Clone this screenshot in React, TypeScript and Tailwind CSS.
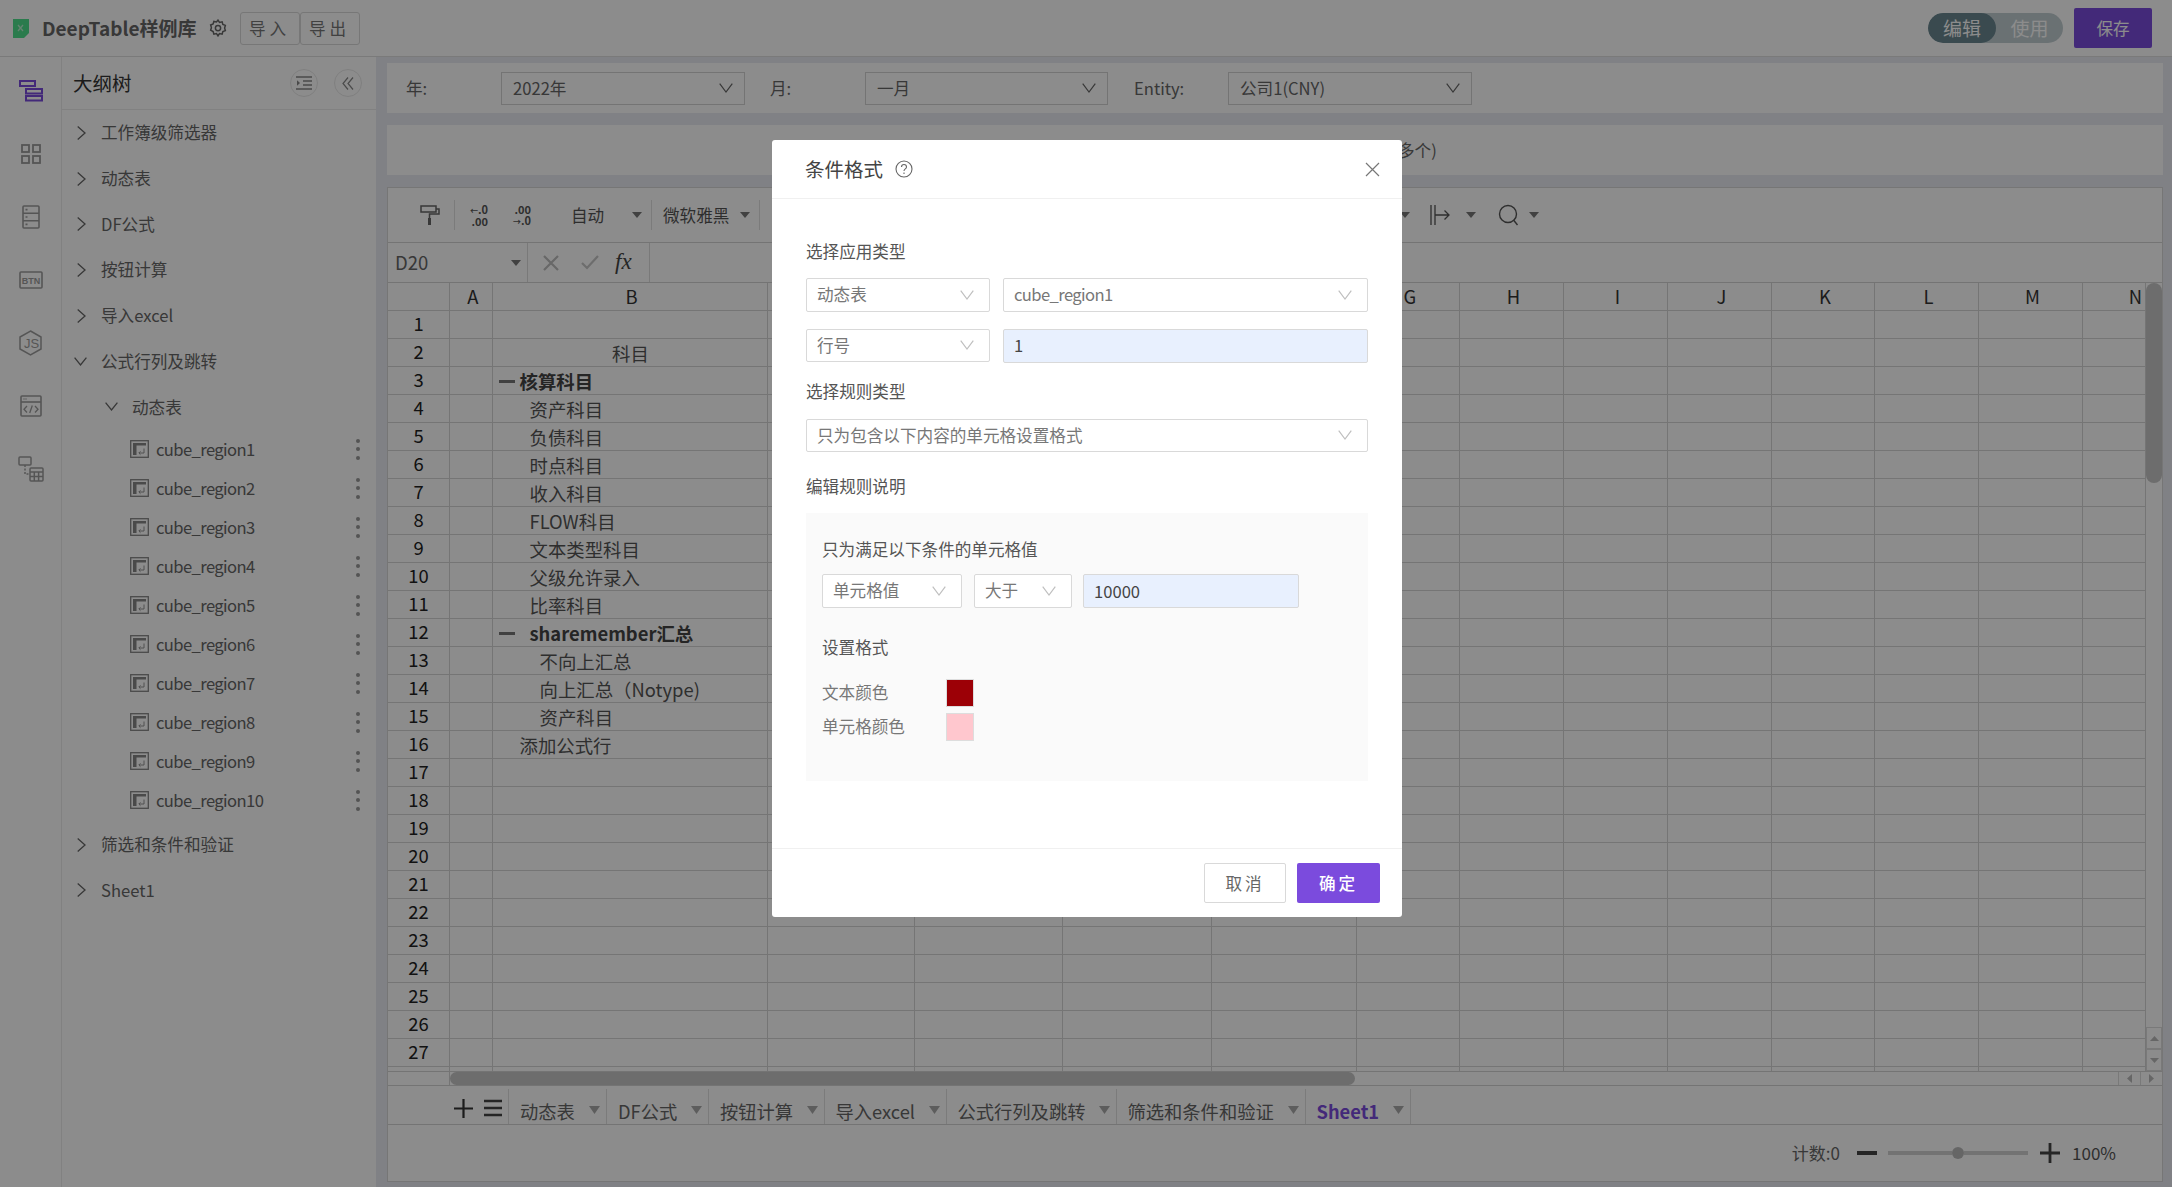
import type { ReactNode } from "react";

const gridCols =
  "grid-cols-[62px_42.5px_275px_147.5px_148px_148.5px_145px_103.5px_104px_104px_104px_103px_104px_104px_63px]";

const columns = ["", "A", "B", "C", "D", "E", "F", "G", "H", "I", "J", "K", "L", "M", "N"];

const treeTop = ["工作簿级筛选器", "动态表", "DF公式", "按钮计算", "导入excel"];
const regions = Array.from({ length: 10 }, (_, i) => `cube_region${i + 1}`);

const tabs = [
  { name: "动态表", w: "w-[98px]" },
  { name: "DF公式", w: "w-[102px]" },
  { name: "按钮计算", w: "w-[115.5px]" },
  { name: "导入excel", w: "w-[122px]" },
  { name: "公式行列及跳转", w: "w-[170px]" },
  { name: "筛选和条件和验证", w: "w-[189px]" },
  { name: "Sheet1", w: "w-[105.5px]", active: true },
];

type CellB = { text: string; pad: string; bold?: boolean; center?: boolean; dash?: string };

const colB: Record<number, CellB> = {
  2: { text: "科目", pad: "", center: true },
  3: { text: "核算科目", pad: "pl-[6px]", bold: true, dash: "mr-[5px]" },
  4: { text: "资产科目", pad: "pl-[37px]" },
  5: { text: "负债科目", pad: "pl-[37px]" },
  6: { text: "时点科目", pad: "pl-[37px]" },
  7: { text: "收入科目", pad: "pl-[37px]" },
  8: { text: "FLOW科目", pad: "pl-[37px]" },
  9: { text: "文本类型科目", pad: "pl-[37px]" },
  10: { text: "父级允许录入", pad: "pl-[37px]" },
  11: { text: "比率科目", pad: "pl-[37px]" },
  12: { text: "sharemember汇总", pad: "pl-[6px]", bold: true, dash: "mr-[15px]" },
  13: { text: "不向上汇总", pad: "pl-[47px]" },
  14: { text: "向上汇总（Notype)", pad: "pl-[47px]" },
  15: { text: "资产科目", pad: "pl-[47px]" },
  16: { text: "添加公式行", pad: "pl-[27px]" },
};

function Caret({ className = "" }: { className?: string }) {
  return (
    <svg width="10" height="6" viewBox="0 0 10 6" className={`shrink-0 ${className}`}>
      <path d="M0 0h10L5 6z" fill="#777" />
    </svg>
  );
}

function ChevronDown({ color = "#bfbfbf" }: { color?: string }) {
  return (
    <svg width="14" height="10" viewBox="0 0 14 10" fill="none" className="shrink-0">
      <path d="M.7.7 7 9 13.3.7" stroke={color} strokeWidth="1.2" />
    </svg>
  );
}

function TreeArrow({ open }: { open?: boolean }) {
  return open ? (
    <svg width="13" height="9" viewBox="0 0 13 9" fill="none" className="shrink-0">
      <path d="M.6.6 6.5 8 12.4.6" stroke="#666" strokeWidth="1.3" />
    </svg>
  ) : (
    <svg width="9" height="14" viewBox="0 0 9 14" fill="none" className="shrink-0">
      <path d="M.7.6 8 7 .7 13.4" stroke="#666" strokeWidth="1.3" />
    </svg>
  );
}

function RailIcons() {
  const s = "#9c9c9c";
  return (
    <div className="flex w-[62px] shrink-0 flex-col items-center border-r border-[#ececec] bg-white pt-[2px]">
      <div className="flex h-[63px] items-center">
        <svg width="24" height="22" viewBox="0 0 24 22" fill="none" stroke="#7b4bdd" strokeWidth="2">
          <rect x="1" y="1" width="15" height="5" />
          <rect x="7" y="9" width="16" height="4.5" />
          <rect x="7" y="16" width="16" height="4.5" />
        </svg>
      </div>
      <div className="flex h-[63px] items-center">
        <svg width="20" height="20" viewBox="0 0 20 20" fill="none" stroke={s} strokeWidth="1.8">
          <rect x="1" y="1" width="7" height="7" />
          <rect x="12" y="1" width="7" height="7" />
          <rect x="1" y="12" width="7" height="7" />
          <rect x="12" y="12" width="7" height="7" />
        </svg>
      </div>
      <div className="flex h-[63px] items-center">
        <svg width="18" height="24" viewBox="0 0 18 24" fill="none" stroke={s} strokeWidth="1.6">
          <rect x="1" y="1" width="16" height="22" rx="1" />
          <path d="M1 8.3h16M1 15.7h16" />
          <path d="M3.5 4.6h2M3.5 12h2M3.5 19.4h2" />
        </svg>
      </div>
      <div className="flex h-[63px] items-center">
        <svg width="24" height="18" viewBox="0 0 24 18" fill="none">
          <rect x="1" y="1" width="22" height="16" rx="1" stroke={s} strokeWidth="1.6" />
          <text x="12" y="12.5" textAnchor="middle" fontSize="9" fontWeight="700" fill={s} fontFamily="Liberation Sans">
            BTN
          </text>
        </svg>
      </div>
      <div className="flex h-[63px] items-center">
        <svg width="23" height="26" viewBox="0 0 23 26" fill="none">
          <path d="M11.5 1 22 7v12l-10.5 6L1 19V7z" stroke={s} strokeWidth="1.5" />
          <text x="12.5" y="18" textAnchor="middle" fontSize="13" fill={s} fontFamily="Liberation Sans">
            JS
          </text>
        </svg>
      </div>
      <div className="flex h-[63px] items-center">
        <svg width="22" height="22" viewBox="0 0 22 22" fill="none" stroke={s} strokeWidth="1.6">
          <rect x="1" y="1" width="20" height="20" rx="1" />
          <path d="M1 7h20" />
          <path d="M3.5 4h4" strokeDasharray="1 1" />
          <path d="M7 11l-3 3.2L7 17.5M15 11l3 3.2-3 3.3M12.3 10.5l-2.6 7.5" strokeWidth="1.3" />
        </svg>
      </div>
      <div className="flex h-[63px] items-center">
        <svg width="26" height="26" viewBox="0 0 26 26" fill="none" stroke={s} strokeWidth="1.5">
          <rect x="1" y="1" width="12" height="8" rx="1" />
          <path d="M7 9v9h4" strokeDasharray="2 1.5" />
          <rect x="12" y="12" width="13" height="13" rx="1" />
          <path d="M12 16h13M12 20.5h13M16.3 16v9M20.6 16v9" />
        </svg>
      </div>
    </div>
  );
}

function RegionIcon() {
  return (
    <svg width="19" height="18" viewBox="0 0 19 18" fill="none" className="shrink-0">
      <rect x=".7" y=".7" width="17.6" height="16.6" stroke="#888" strokeWidth="1.3" />
      <path d="M3 3h13v2.600H3zM3 5.600h3.500V15H3z" fill="#888" />
      <path d="M14 8.500v4.500h-5M10.500 11.300 8.800 13l1.700 1.700" stroke="#888" strokeWidth=".9" />
    </svg>
  );
}

function Sidebar() {
  return (
    <div className="flex w-[314px] shrink-0 flex-col bg-white">
      <div className="flex h-[53px] shrink-0 items-center border-b border-[#ececec] pr-[14px] pl-[11px]">
        <span className="flex-1 text-[19.5px] text-[#333]">大纲树</span>
        <div className="flex h-[28px] w-[28px] items-center justify-center rounded-full border border-[#e8e8e8]">
          <svg width="16" height="14" viewBox="0 0 16 14" fill="none" stroke="#888" strokeWidth="1.4">
            <path d="M0 1h16M7 5h9M7 9h9M0 13h16" />
            <path d="M1 4.300 4 7 1 9.700z" fill="#888" stroke="none" />
          </svg>
        </div>
        <div className="ml-[16px] flex h-[28px] w-[28px] items-center justify-center rounded-full border border-[#e8e8e8]">
          <svg width="12" height="13" viewBox="0 0 12 13" fill="none" stroke="#888" strokeWidth="1.2">
            <path d="M6 .5 1 6.500l5 6M11 .5 6 6.500l5 6" />
          </svg>
        </div>
      </div>
      {treeTop.map((t) => (
        <div key={t} className="flex h-[45.7px] shrink-0 items-center pl-[15px] text-[#666]">
          <TreeArrow />
          <span className="ml-[15px]">{t}</span>
        </div>
      ))}
      <div className="flex h-[45.7px] shrink-0 items-center pl-[12px] text-[#666]">
        <TreeArrow open />
        <span className="ml-[14px]">公式行列及跳转</span>
      </div>
      <div className="flex h-[45.7px] shrink-0 items-center pl-[43px] text-[#666]">
        <TreeArrow open />
        <span className="ml-[14px]">动态表</span>
      </div>
      {regions.map((r) => (
        <div key={r} className="flex h-[39px] shrink-0 items-center pr-[16px] pl-[68px] text-[#666]">
          <RegionIcon />
          <span className="ml-[7px] flex-1 tracking-[-0.6px]">{r}</span>
          <span className="flex flex-col gap-[4.5px]">
            <i className="h-[4px] w-[4px] rounded-full bg-[#999]" />
            <i className="h-[4px] w-[4px] rounded-full bg-[#999]" />
            <i className="h-[4px] w-[4px] rounded-full bg-[#999]" />
          </span>
        </div>
      ))}
      <div className="mt-[2px] flex h-[45.7px] shrink-0 items-center pl-[15px] text-[#666]">
        <TreeArrow />
        <span className="ml-[15px]">筛选和条件和验证</span>
      </div>
      <div className="flex h-[45.7px] shrink-0 items-center pl-[15px] text-[#666]">
        <TreeArrow />
        <span className="ml-[15px]">Sheet1</span>
      </div>
    </div>
  );
}

function FilterSelect({ label, w }: { label: string; w: string }) {
  return (
    <div className={`flex h-[33px] ${w} shrink-0 items-center justify-between border border-[#d4d4d4] pr-[11px] pl-[11px] text-[#666]`}>
      <span>{label}</span>
      <ChevronDown color="#666" />
    </div>
  );
}

function Sep({ className = "" }: { className?: string }) {
  return <span className={`h-[30px] w-px shrink-0 bg-[#e0e0e0] ${className}`} />;
}

function Toolbar() {
  return (
    <div className="flex h-[55px] shrink-0 items-center border-b border-[#d4d4d4] text-[#555]">
      <svg width="20" height="20" viewBox="0 0 20 20" fill="none" stroke="#666" strokeWidth="1.5" className="ml-[32px] shrink-0">
        <path d="M1 1h15v6H1z" />
        <path d="M16 4h3v5H9.500v11" strokeWidth="1.5" />
        <path d="M9.500 13v7" strokeWidth="3" />
      </svg>
      <Sep className="ml-[14px]" />
      <span className="ml-[15px] flex w-[18px] shrink-0 flex-col items-end text-[11px] leading-[11px] font-semibold whitespace-nowrap">
        <span>
          <span className="text-[8px]">←</span>.0
        </span>
        <span>.00</span>
      </span>
      <span className="ml-[27px] flex w-[16px] shrink-0 flex-col items-end text-[11px] leading-[11px] font-semibold whitespace-nowrap">
        <span>.00</span>
        <span>
          <span className="text-[8px]">→</span>.0
        </span>
      </span>
      <span className="ml-[40px] w-[34px] shrink-0 whitespace-nowrap">自动</span>
      <Caret className="ml-[27px]" />
      <Sep className="ml-[9px]" />
      <span className="ml-[11px] w-[66px] shrink-0 whitespace-nowrap">微软雅黑</span>
      <Caret className="ml-[11px]" />
      <Sep className="ml-[9px]" />
      <Caret className="ml-[640px]" />
      <svg width="20" height="20" viewBox="0 0 20 20" fill="none" stroke="#555" strokeWidth="1.3" className="ml-[20px] shrink-0">
        <path d="M1 0v20M5 0v20M5 10h14M14.500 5.500 19 10l-4.500 4.500" />
      </svg>
      <Caret className="ml-[16px]" />
      <svg width="22" height="22" viewBox="0 0 22 22" fill="none" stroke="#555" strokeWidth="1.4" className="ml-[22px] shrink-0">
        <circle cx="10" cy="10" r="8.5" />
        <path d="m15.500 16 4 5" />
      </svg>
      <Caret className="ml-[9px]" />
    </div>
  );
}

function FormulaBar() {
  return (
    <div className="flex h-[40px] shrink-0 items-center border-b border-[#d4d4d4]">
      <span className="ml-[7px] w-[116px] shrink-0 text-[18.5px] text-[#666]">D20</span>
      <Caret />
      <span className="ml-[6px] h-full w-px bg-[#dcdcdc]" />
      <svg width="16" height="16" viewBox="0 0 16 16" fill="none" stroke="#bdbdbd" strokeWidth="2.2" className="ml-[15px] shrink-0">
        <path d="m1 1 14 14M15 1 1 15" />
      </svg>
      <svg width="18" height="15" viewBox="0 0 18 15" fill="none" stroke="#c6c6c6" strokeWidth="2.2" className="ml-[22px] shrink-0">
        <path d="m1 8 5 5L17 1" />
      </svg>
      <span className="ml-[16px] w-[18px] shrink-0 font-['Liberation_Serif',serif] text-[23px] text-[#444] italic">fx</span>
      <span className="ml-[16px] h-full w-px bg-[#dcdcdc]" />
    </div>
  );
}

function Grid() {
  const rows = Array.from({ length: 28 }, (_, i) => i + 1);
  const line = "box-border border-r border-b border-[#d6d6d6]";
  return (
    <div className={`grid h-[788px] w-[1758px] shrink-0 auto-rows-[28px] overflow-hidden ${gridCols} text-[18.4px] text-[#555]`}>
      {columns.map((c, i) => (
        <div
          key={`h${i}`}
          className={`flex items-center ${i === 14 ? "justify-end pr-[3px]" : "justify-center pl-[4px]"} text-[#333] ${line}`}
        >
          {c}
        </div>
      ))}
      {rows.map((r) => {
        const b = colB[r];
        return columns.map((_, i) => {
          if (i === 0) {
            return (
              <div key={`${r}-0`} className={`flex items-center justify-center pb-[2px] text-[#222] ${line}`}>
                {r}
              </div>
            );
          }
          if (i === 2 && b) {
            return (
              <div
                key={`${r}-2`}
                className={`flex items-center pt-[2px] whitespace-nowrap ${b.center ? "justify-center pl-[2px]" : b.pad} ${b.bold ? "font-bold text-[#444]" : ""} ${line}`}
              >
                {b.dash && <span className={`h-[2.5px] w-[16px] bg-[#777] ${b.dash}`} />}
                {b.text}
              </div>
            );
          }
          return <div key={`${r}-${i}`} className={line} />;
        });
      })}
    </div>
  );
}

function VScroll() {
  return (
    <div className="flex w-[16px] shrink-0 flex-col bg-white">
      <div className="h-[200px] rounded-full bg-[#c6c6c6]" />
      <div className="flex-1" />
      <div className="flex h-[22px] items-center justify-center border border-[#dcdcdc]">
        <svg width="9" height="5" viewBox="0 0 9 5"><path d="M0 5h9L4.500 0z" fill="#bbb" /></svg>
      </div>
      <div className="flex h-[22px] items-center justify-center border border-[#dcdcdc]">
        <svg width="9" height="5" viewBox="0 0 9 5"><path d="M0 0h9L4.500 5z" fill="#bbb" /></svg>
      </div>
    </div>
  );
}

function HScroll() {
  return (
    <div className="flex h-[15px] shrink-0 border-t border-b border-[#d4d4d4]">
      <div className="w-[62px] shrink-0 border-r border-[#d4d4d4]" />
      <div className="w-[905px] rounded-full bg-[#c6c6c6]" />
      <div className="flex-1" />
      <div className="flex w-[22px] items-center justify-center border-l border-[#dcdcdc]">
        <svg width="5" height="9" viewBox="0 0 5 9"><path d="M5 0v9L0 4.500z" fill="#bbb" /></svg>
      </div>
      <div className="flex w-[22px] items-center justify-center border-l border-[#dcdcdc]">
        <svg width="5" height="9" viewBox="0 0 5 9"><path d="M0 0v9l5-4.500z" fill="#bbb" /></svg>
      </div>
    </div>
  );
}

function TabBar() {
  return (
    <div className="flex h-[39px] shrink-0 items-stretch border-b border-[#d4d4d4] pt-[3px] text-[18.3px] text-[#666]">
      <svg width="19" height="19" viewBox="0 0 19 19" fill="none" stroke="#333" strokeWidth="2.2" className="mt-[10px] ml-[66px] shrink-0">
        <path d="M9.500 0v19M0 9.500h19" />
      </svg>
      <svg width="18" height="18" viewBox="0 0 18 18" fill="none" stroke="#444" strokeWidth="2.4" className="mt-[10px] ml-[11px] shrink-0">
        <path d="M0 2h18M0 9h18M0 16h18" />
      </svg>
      <div className="ml-[6px] flex border-r border-[#e0e0e0]">
        {tabs.map((t) => (
          <div
            key={t.name}
            className={`flex ${t.w} items-center justify-between border-l border-[#e0e0e0] pt-[10px] pr-[6px] pl-[11px] whitespace-nowrap ${t.active ? "font-bold text-[#7b4bdd]" : ""}`}
          >
            <span>{t.name}</span>
            <svg width="11" height="8" viewBox="0 0 11 8" className="mb-[3px] shrink-0"><path d="M0 0h11L5.500 8z" fill="#aaa" /></svg>
          </div>
        ))}
      </div>
    </div>
  );
}

function StatusBar() {
  return (
    <div className="flex flex-1 items-center justify-end pr-[46px] text-[17px] text-[#666]">
      <span>计数:0</span>
      <span className="ml-[17px] h-[4px] w-[20px] bg-[#444]" />
      <div className="ml-[11px] flex items-center">
        <span className="h-[4px] w-[64px] bg-[#d2d2d2]" />
        <span className="h-[12px] w-[12px] rounded-full bg-[#bbb]" />
        <span className="h-[4px] w-[64px] bg-[#d2d2d2]" />
      </div>
      <svg width="20" height="20" viewBox="0 0 20 20" stroke="#444" strokeWidth="2.8" className="ml-[12px] shrink-0">
        <path d="M10 0v20M0 10h20" />
      </svg>
      <span className="ml-[12px] text-[#555]">100%</span>
    </div>
  );
}

function DialogSelect({ label, w, narrow }: { label: string; w: string; narrow?: boolean }) {
  return (
    <div className={`flex h-[33.5px] ${w} shrink-0 items-center justify-between rounded-[2px] border border-[#d9d9d9] bg-white pr-[15px] pl-[10px] text-[#777]`}>
      <span className={narrow ? "tracking-[-0.6px]" : ""}>{label}</span>
      <ChevronDown />
    </div>
  );
}

function DialogInput({ value, w }: { value: string; w: string }) {
  return (
    <div className={`flex h-[34px] ${w} shrink-0 items-center rounded-[2px] border border-[#d9d9d9] bg-[#e8f0fe] pl-[10px] text-[#444]`}>
      {value}
    </div>
  );
}

function Label({ children, className = "" }: { children: ReactNode; className?: string }) {
  return <div className={`h-[24px] leading-[24px] text-[#555] ${className}`}>{children}</div>;
}

function ConditionDialog() {
  return (
    <div className="flex h-[777px] w-[630px] flex-col rounded-[3px] bg-white">
      <div className="flex h-[59px] shrink-0 items-center border-b border-[#f0f0f0] pr-[22px] pl-[33px]">
        <span className="text-[19.5px] text-[#444]">条件格式</span>
        <svg width="18" height="18" viewBox="0 0 18 18" fill="none" stroke="#666" strokeWidth="1.1" className="ml-[12px] shrink-0">
          <circle cx="9" cy="9" r="8" />
          <path d="M6.500 7c0-3.300 5-3.300 5 0 0 2-2.500 1.800-2.500 4" />
          <path d="M9 12.500v1.500" />
        </svg>
        <div className="flex-1" />
        <svg width="15" height="15" viewBox="0 0 15 15" fill="none" stroke="#777" strokeWidth="1.2" className="shrink-0">
          <path d="m1 1 13 13M14 1 1 14" />
        </svg>
      </div>
      <div className="flex flex-1 flex-col px-[34px]">
        <Label className="mt-[40px]">选择应用类型</Label>
        <div className="mt-[15px] flex gap-[13px]">
          <DialogSelect label="动态表" w="w-[184px]" />
          <DialogSelect label="cube_region1" w="w-[365px]" narrow />
        </div>
        <div className="mt-[17px] flex gap-[13px]">
          <DialogSelect label="行号" w="w-[184px]" />
          <DialogInput value="1" w="w-[365px]" />
        </div>
        <Label className="mt-[16px]">选择规则类型</Label>
        <div className="mt-[16px]">
          <DialogSelect label="只为包含以下内容的单元格设置格式" w="w-full" />
        </div>
        <Label className="mt-[22px]">编辑规则说明</Label>
        <div className="mt-[15px] h-[268px] bg-[#fafafa] pt-[24px] pl-[16px]">
          <Label>只为满足以下条件的单元格值</Label>
          <div className="mt-[13px] flex">
            <DialogSelect label="单元格值" w="w-[140px]" />
            <div className="ml-[12px]">
              <DialogSelect label="大于" w="w-[98px]" />
            </div>
            <div className="ml-[11px]">
              <DialogInput value="10000" w="w-[216px]" />
            </div>
          </div>
          <Label className="mt-[27px]">设置格式</Label>
          <div className="mt-[20px] flex items-center">
            <span className="w-[124px] pb-[2px] text-[#777]">文本颜色</span>
            <span className="h-[28px] w-[28px] border border-[#dddddd] bg-[#9c0006]" />
          </div>
          <div className="mt-[6px] flex items-center">
            <span className="w-[124px] pb-[2px] text-[#777]">单元格颜色</span>
            <span className="h-[28px] w-[28px] border border-[#dddddd] bg-[#ffc7ce]" />
          </div>
        </div>
      </div>
      <div className="flex h-[69px] shrink-0 justify-end gap-[11px] border-t border-[#f0f0f0] pt-[14px] pr-[22px]">
        <button className="h-[40px] w-[82px] rounded-[2px] border border-[#d9d9d9] bg-white tracking-[3px] text-[#666]">取消</button>
        <button className="h-[40px] w-[83px] rounded-[2px] bg-[#7b4bdd] font-medium tracking-[3px] text-white">确定</button>
      </div>
    </div>
  );
}

export default function App() {
  return (
    <div className="relative flex h-[1187px] w-[2172px] flex-col overflow-hidden bg-[#e9ecf2] font-['Noto_Sans_CJK_SC','Noto_Sans',sans-serif] text-[16.6px]">
      <header className="flex h-[57px] shrink-0 items-center border-b border-[#dedede] bg-white pr-[20px] pl-[13px]">
        <svg width="16" height="19" viewBox="0 0 16 19" className="shrink-0">
          <path d="M0 0h16v14l-5 5H0z" fill="#4fe08c" />
          <path d="M5 6l5 6M10 6l-5 6" stroke="#b8f0cf" strokeWidth="1.3" />
        </svg>
        <span className="ml-[13px] text-[19px] font-bold text-[#666]">DeepTable样例库</span>
        <svg width="18" height="18" viewBox="0 0 24 24" fill="none" stroke="#666" strokeWidth="2" className="ml-[12px] shrink-0">
          <path d="M12 1.500l2 3 3.500-.8 1 3.500 3.300 1.300-1 3.500 1 3.500-3.300 1.300-1 3.500-3.500-.8-2 3-2-3-3.500.8-1-3.500L2.200 15l1-3.500-1-3.500 3.300-1.300 1-3.500 3.500.8z" />
          <circle cx="12" cy="12" r="3.5" />
        </svg>
        <button className="ml-[13px] h-[33px] w-[60px] rounded-[3px] border border-[#d9d9d9] bg-white tracking-[4px] text-[#777]">导入</button>
        <button className="h-[33px] w-[60px] rounded-[3px] border border-[#d9d9d9] bg-white tracking-[4px] text-[#777]">导出</button>
        <div className="flex-1" />
        <div className="flex h-[30px] w-[135px] overflow-hidden rounded-full bg-[#c2ced2] text-[19px]">
          <span className="flex w-[68px] items-center justify-center rounded-full bg-[#6a8790] text-white">编辑</span>
          <span className="flex flex-1 items-center justify-center text-white">使用</span>
        </div>
        <button className="ml-[11px] h-[40px] w-[78px] rounded-[2px] bg-[#7b4bdd] text-white">保存</button>
      </header>

      <div className="flex min-h-0 flex-1">
        <RailIcons />
        <Sidebar />
        <main className="flex min-w-0 flex-1 flex-col pt-[6px] pr-[9px] pb-[5px] pl-[11px]">
          <div className="flex h-[50px] shrink-0 items-center bg-white pl-[19px] text-[#666]">
            <span className="w-[95px] shrink-0">年:</span>
            <FilterSelect label="2022年" w="w-[244px]" />
            <span className="ml-[25px] w-[95px] shrink-0">月:</span>
            <FilterSelect label="一月" w="w-[243px]" />
            <span className="ml-[26px] w-[94px] shrink-0">Entity:</span>
            <FilterSelect label="公司1(CNY)" w="w-[244px]" />
          </div>
          <div className="mt-[12px] flex h-[50px] shrink-0 items-center bg-white pl-[1011px] text-[#666]">多个)</div>
          <div className="mt-[12px] flex min-h-0 flex-1 flex-col border border-[#d8d8d8] bg-white">
            <Toolbar />
            <FormulaBar />
            <div className="flex h-[788px] shrink-0">
              <Grid />
              <VScroll />
            </div>
            <HScroll />
            <TabBar />
            <StatusBar />
          </div>
        </main>
      </div>

      <div className="absolute inset-0 flex justify-center bg-black/45 pt-[140px] pl-[2px]">
        <ConditionDialog />
      </div>
    </div>
  );
}
